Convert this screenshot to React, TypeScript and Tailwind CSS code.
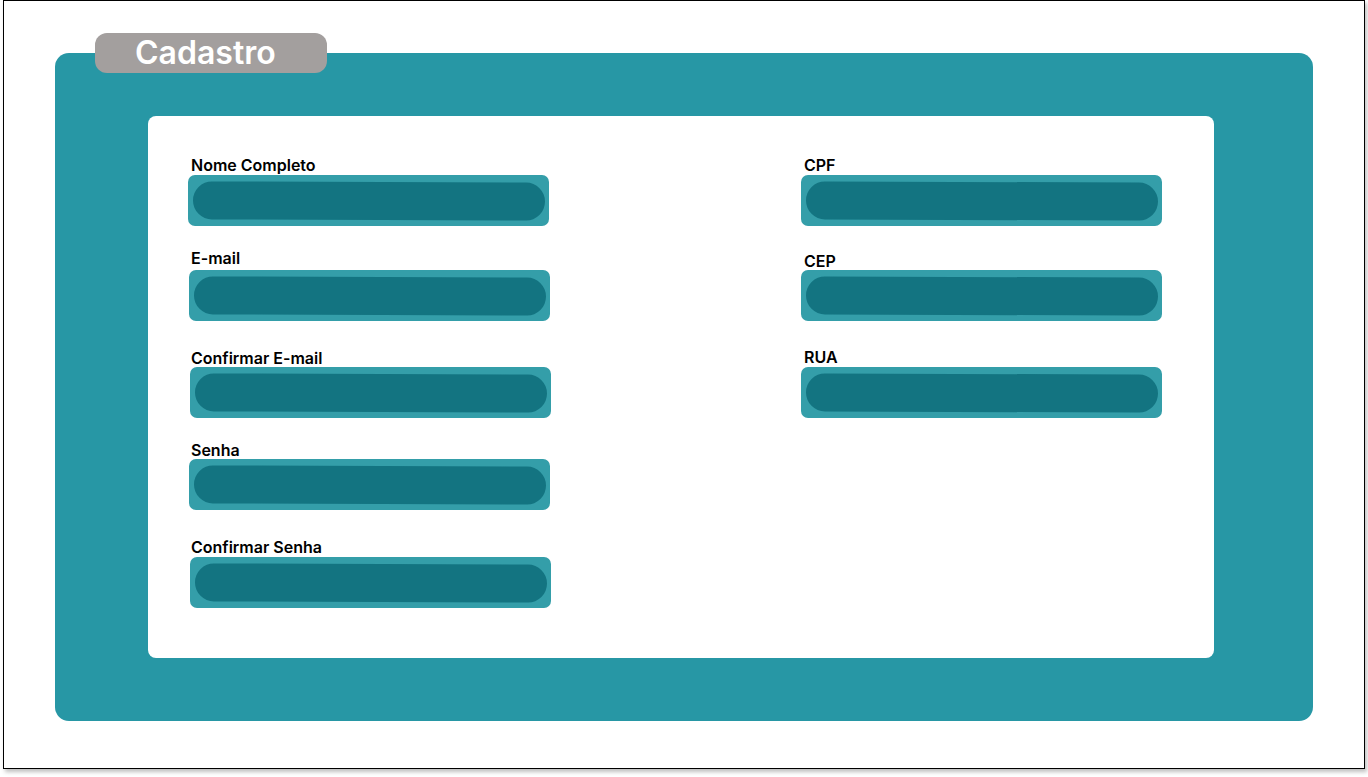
import React from 'react';

interface FieldProps {
  label: string;
  top: string;
  gap: string;
  shift?: string;
}

const Field: React.FC<FieldProps> = ({ label, top, gap, shift = '' }) => (
  <div className={`flex flex-col ${top}`}>
    <label className="h-[18px] pl-[3px] text-[16px] leading-[18px] font-semibold text-black">{label}</label>
    <div className={`${gap} ${shift} flex h-[51px] w-[361px] items-center rounded-[7px] bg-[#349ea9] pl-[5px] pr-[4px]`}>
      <div className="h-[38px] w-full rotate-[0.2deg] rounded-full bg-[#137481]" />
    </div>
  </div>
);

const App: React.FC = () => {
  return (
    <div className="min-h-screen bg-white pl-[3px] font-['Inter','Liberation_Sans',sans-serif]">
      <div className="h-[769px] w-[1362px] border border-black bg-white pt-[52px] pl-[51px] shadow-[2px_3px_4px_rgba(0,0,0,0.25)]">
        <div className="relative h-[668px] w-[1258px] rounded-[14px] bg-[#2797a5] pt-[63px] pl-[93px]">
          <div className="absolute left-[40px] top-[-20px] flex h-[40px] w-[232px] items-center rounded-[12px] bg-[#a39f9e] pl-[40px]">
            <span className="text-[32px] leading-none font-semibold text-white">Cadastro</span>
          </div>

          <div className="flex h-[542px] w-[1066px] rounded-[8px] bg-white pt-[40px] pl-[40px]">
            <div className="flex w-[363px] flex-col">
              <Field label="Nome Completo" top="" gap="mt-[1px]" />
              <Field label="E-mail" top="mt-[23px]" gap="mt-[3px]" shift="ml-[1px]" />
              <Field label="Confirmar E-mail" top="mt-[28px]" gap="mt-0" shift="ml-[2px]" />
              <Field label="Senha" top="mt-[23px]" gap="mt-0" shift="ml-[1px]" />
              <Field label="Confirmar Senha" top="mt-[28px]" gap="mt-[1px]" shift="ml-[2px]" />
            </div>

            <div className="ml-[250px] flex w-[363px] flex-col">
              <Field label="CPF" top="" gap="mt-[1px]" />
              <Field label="CEP" top="mt-[26px]" gap="mt-0" />
              <Field label="RUA" top="mt-[27px]" gap="mt-[1px]" />
            </div>
          </div>
        </div>
      </div>
    </div>
  );
};

export default App;
